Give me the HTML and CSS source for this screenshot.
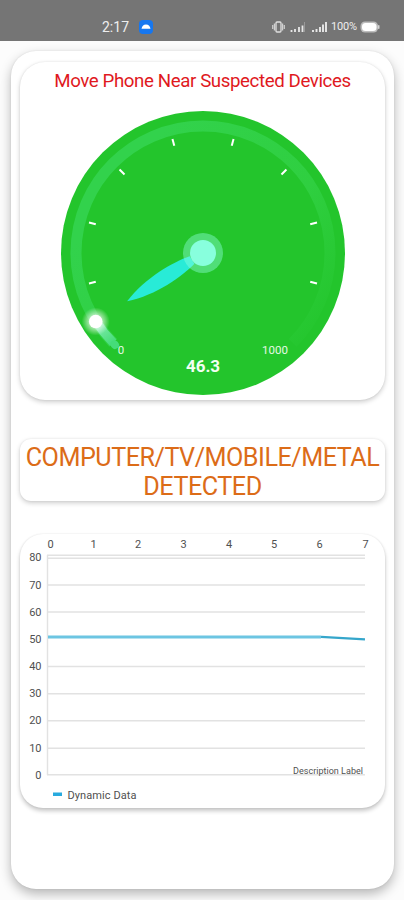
FILE: index.html
```html
<!DOCTYPE html>
<html lang="en">
<head>
<meta charset="UTF-8">
<meta name="viewport" content="width=device-width, initial-scale=1.0">
<title>Device Detector</title>
<link rel="stylesheet" href="styles.css">
</head>
<body>
<header class="status-bar">
    <div class="status-left">
        <span class="clock">2:17</span>
        <svg class="app-icon" width="14" height="14" viewBox="0 0 14 14">
            <rect width="14" height="14" rx="4" fill="#1677f0"/>
            <path d="M2.5 8.8C3 6.4 4.3 4.5 7 4.5s4 1.9 4.5 4.3z" fill="#fff"/>
        </svg>
    </div>
    <div class="status-right">
        <svg width="56" height="14" viewBox="0 0 56 14">
            <!-- vibrate -->
            <rect x="4" y="2" width="5" height="10" rx="1" fill="none" stroke="#e0e0e0" stroke-width="1.3"/>
            <path d="M2.4 3.5v7M.7 5v4M10.6 3.5v7M12.3 5v4" stroke="#d0d0d0" stroke-width="1.2"/>
            <!-- signal 1 -->
            <path d="M19.5 12v-2M23 12V9M27 12V7M30.5 12V5.5" stroke="#e8e8e8" stroke-width="1.8"/>
            <path d="M32.5 12V2" stroke="#999" stroke-width="1"/>
            <!-- signal 2 -->
            <path d="M41 12v-2M44.5 12V9M48 12V7M51 12V4.5M54 12V2" stroke="#e8e8e8" stroke-width="1.9"/>
        </svg>
        <span class="battery-text">100%</span>
        <svg width="20" height="12" viewBox="0 0 20 12">
            <rect x=".5" y=".5" width="17.5" height="11" rx="4.5" fill="#bdbdbd"/>
            <rect x="2" y="2" width="14.5" height="8" rx="3.5" fill="#fff"/>
            <rect x="18" y="4" width="1.5" height="4" rx=".7" fill="#d5d5d5"/>
        </svg>
    </div>
</header>

<main class="container">
    <section class="card meter-card">
        <h1>Move Phone Near Suspected Devices</h1>
        <svg class="meter" width="284" height="284" viewBox="-142 -142 284 284">
            <defs>
                <linearGradient id="track" gradientUnits="userSpaceOnUse" x1="-90" y1="-60" x2="105" y2="95">
                    <stop offset="0" stop-color="#32d24c"/>
                    <stop offset=".6" stop-color="#2fcf40"/>
                    <stop offset="1" stop-color="#24c62d"/>
                </linearGradient>
                <linearGradient id="progress" gradientUnits="userSpaceOnUse" x1="-90" y1="90" x2="-107" y2="68">
                    <stop offset="0" stop-color="#45dc79"/>
                    <stop offset="1" stop-color="#8aeeb4"/>
                </linearGradient>
                <radialGradient id="glow">
                    <stop offset=".42" stop-color="#fff" stop-opacity=".65"/>
                    <stop offset="1" stop-color="#fff" stop-opacity="0"/>
                </radialGradient>
            </defs>
            <circle r="142" fill="#23c52c"/>
            <path d="M-89.8 89.8A127 127 0 1 1 89.8 89.8" fill="none" stroke="url(#track)" stroke-width="11"/>
            <path d="M-89.8 89.8A127 127 0 0 1 -107.1 68.2" fill="none" stroke="url(#progress)" stroke-width="9"/>
            <path d="M-88 92l-.5-.6" stroke="#45dc79" stroke-width="8" stroke-linecap="round"/>
            <g stroke="#fff" stroke-width="2">
                <path d="M0-118v7" transform="rotate(-105)"/>
                <path d="M0-118v7" transform="rotate(-75)"/>
                <path d="M0-118v7" transform="rotate(-45)"/>
                <path d="M0-118v7" transform="rotate(-15)"/>
                <path d="M0-118v7" transform="rotate(15)"/>
                <path d="M0-118v7" transform="rotate(45)"/>
                <path d="M0-118v7" transform="rotate(75)"/>
                <path d="M0-118v7" transform="rotate(105)"/>
            </g>
            <circle cx="-107.3" cy="68.5" r="14" fill="url(#glow)"/>
            <circle cx="-107.3" cy="68.5" r="6.8" fill="#fff"/>
            <path d="M0-90C10.5-62 8.5-30 4.5-13H-4.5C-8.5-30-10.5-62 0-90z" fill="#28ebd7" transform="rotate(-122.5)"/>
            <circle r="20" fill="#8dffdd" fill-opacity=".43"/>
            <circle r="13" fill="#88ffdd"/>
            <text class="meter-limit" x="-82" y="101" text-anchor="middle">0</text>
            <text class="meter-limit" x="72" y="101" text-anchor="middle" textLength="26">1000</text>
            <text class="meter-value" x="0" y="119" text-anchor="middle" textLength="34">46.3</text>
        </svg>
    </section>

    <section class="card result-card">
        <p>COMPUTER/TV/MOBILE/METAL DETECTED</p>
    </section>

    <section class="card chart-card">
        <svg class="chart" width="365" height="274" viewBox="20 534 365 274">
            <g stroke="#e2e2e2" stroke-width="1.4">
                <path d="M47 555.3h318M47 558.3h318M47 585h318M47 612h318M47 666.5h318M47 693.7h318M47 720.8h318M47 748.3h318M47 774.7h318"/>
                <path d="M47.5 555v220"/>
            </g>
            <g class="axis" text-anchor="middle">
                <text x="50.5" y="548">0</text>
                <text x="93.5" y="548">1</text>
                <text x="138" y="548">2</text>
                <text x="183.5" y="548">3</text>
                <text x="229" y="548">4</text>
                <text x="274" y="548">5</text>
                <text x="319.5" y="548">6</text>
                <text x="365.5" y="548">7</text>
            </g>
            <g class="axis" text-anchor="end">
                <text x="41.5" y="561">80</text>
                <text x="41.5" y="588.5">70</text>
                <text x="41.5" y="615.5">60</text>
                <text x="41.5" y="643">50</text>
                <text x="41.5" y="670">40</text>
                <text x="41.5" y="697">30</text>
                <text x="41.5" y="724">20</text>
                <text x="41.5" y="751.5">10</text>
                <text x="41.5" y="779">0</text>
            </g>
            <path d="M48 637H321" fill="none" stroke="#6cc5e2" stroke-width="3"/>
            <path d="M321 636.8L365 639.3" fill="none" stroke="#35a6cb" stroke-width="2.2"/>
            <text class="description" x="363" y="773.5" text-anchor="end" textLength="70">Description Label</text>
            <rect x="53" y="792.5" width="9" height="3.5" fill="#28aade"/>
            <text class="legend" x="67.5" y="798.5" textLength="69">Dynamic Data</text>
        </svg>
    </section>
</main>
</body>
</html>
```
FILE: styles.css
```css
body {
    font-family: Roboto, "Liberation Sans", sans-serif;
    margin: 0;
    padding: 0;
    height: 900px;
    overflow: hidden;
    background-color: #fcfcfc;
}
.status-bar {
    height: 41px;
    box-sizing: border-box;
    padding: 11px 24px 0 102px;
    background-color: #757575;
    color: #eee;
    display: flex;
    justify-content: space-between;
}
.status-left,
.status-right {
    height: 31px;
    display: flex;
    align-items: center;
}
.clock {
    font-size: 14px;
    width: 37px;
}
.status-right {
    gap: 3px;
}
.battery-text {
    font-size: 11px;
    width: 26px;
    letter-spacing: -0.2px;
}
.container {
    width: 383px;
    height: 838px;
    box-sizing: border-box;
    margin: 10px 0 0 11px;
    padding: 11px 9px;
    background-color: #fff;
    border-radius: 25px;
    box-shadow: 0 5px 12px rgba(0, 0, 0, 0.28), 0 0 2px rgba(0, 0, 0, 0.1);
    display: flex;
    flex-direction: column;
}
.card {
    width: 365px;
    background-color: #fff;
    box-shadow: 0 2px 5px rgba(0, 0, 0, 0.2), 0 0 2px rgba(0, 0, 0, 0.08);
    text-align: center;
}
.meter-card {
    height: 338px;
    border-radius: 25px;
}
h1 {
    margin: 0;
    padding-top: 8px;
    height: 41px;
    line-height: 23px;
    font-size: 18.7px;
    font-weight: 400;
    letter-spacing: -0.4px;
    color: #e0191e;
    white-space: nowrap;
}
.meter {
    display: block;
    margin: 0 auto;
}
.meter-limit {
    font-size: 11.5px;
    fill: #e4f9e4;
}
.meter-value {
    font-size: 17px;
    font-weight: 700;
    fill: #f2fff2;
}
.result-card {
    height: 62px;
    margin-top: 39px;
    border-radius: 11px;
}
.result-card p {
    margin: 0;
    padding-top: 4px;
    font-size: 25.2px;
    line-height: 29px;
    letter-spacing: -0.5px;
    color: #dc6c18;
}
.chart-card {
    height: 274px;
    margin-top: 33px;
    border-radius: 23px;
    box-shadow: 0 3px 4px rgba(0, 0, 0, 0.22), 0 0 2px rgba(0, 0, 0, 0.1);
}
.chart {
    display: block;
}
.axis {
    font-size: 11px;
    fill: #505050;
}
.description {
    font-size: 9px;
    fill: #505050;
}
.legend {
    font-size: 11px;
    fill: #505050;
}
```
